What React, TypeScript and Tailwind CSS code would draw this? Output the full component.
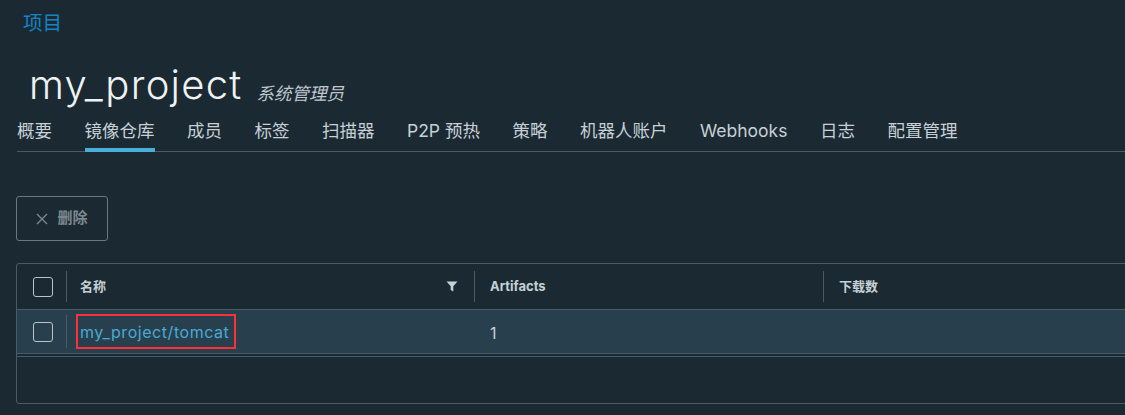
import React from "react";

const tabs = ["概要", "镜像仓库", "成员", "标签", "扫描器", "P2P 预热", "策略", "机器人账户", "Webhooks", "日志", "配置管理"];

function Checkbox() {
  return <div className="w-[20px] h-[20px] rounded-[3px] border border-[#b9c3c9] shrink-0" />;
}

export default function App() {
  return (
    <div className="w-[1125px] h-[415px] overflow-hidden bg-[#1b2a32] font-['Inter','Noto_Sans_CJK_SC',sans-serif]">
      <div className="h-[48px] flex items-center pl-[23px] text-[19.5px] text-[#1683c4]">项目</div>
      <div className="h-[64px] flex items-end pb-[6px] pl-[29px] gap-[14px]">
        <span className="text-[40px] font-light leading-none text-[#eef2f4] pb-[1px] tracking-[1.25px]">my_project</span>
        <span className="text-[17.5px] italic text-[#bfc8ce] leading-none pb-[4px]">系统管理员</span>
      </div>
      <div className="h-[40px] ml-[17px] flex items-stretch gap-[32.5px] border-b border-[#4a5964]">
        {tabs.map((t, i) => (
          <div
            key={t}
            className={
              "flex items-center text-[17.5px] text-[#c7d0d6] pt-[2px] -mb-px " +
              (i === 1 ? "border-b-[4px] border-[#49afd9]" : "border-b-[4px] border-transparent")
            }
          >
            {t}
          </div>
        ))}
      </div>
      <div className="pt-[44px] pl-[16px]">
        <div className="w-[92px] h-[45px] rounded-[3px] border border-[#6a7780] flex items-center justify-center gap-[9px] text-[15px] text-[#7c8890]">
          <svg width="12" height="12" viewBox="0 0 12 12" className="shrink-0">
            <path d="M1 1L11 11M11 1L1 11" stroke="#7c8890" strokeWidth="1.4" />
          </svg>
          <span className="font-bold">删除</span>
        </div>
      </div>
      <div className="mt-[22px] ml-[16px] w-[1130px] h-[141px] rounded-[3px] border border-[#4b5a64] flex flex-col">
        <div className="h-[46px] flex items-center border-b border-[#4b5a64] text-[13px] font-bold text-[#c5d0d6]">
          <div className="w-[49px] flex justify-center pl-[2px]">
            <Checkbox />
          </div>
          <div className="w-[1px] h-[31px] bg-[#4b5a64]" />
          <div className="w-[407px] flex items-center justify-between pl-[13px] pr-[16px]">
            <span>名称</span>
            <svg width="12" height="11" viewBox="0 0 12 11">
              <path d="M0.5 0.5H11.5L7.3 5.2V10.5L4.7 9V5.2Z" fill="#c5d0d6" />
            </svg>
          </div>
          <div className="w-[1px] h-[31px] bg-[#4b5a64]" />
          <div className="w-[348px] pl-[15px]">Artifacts</div>
          <div className="w-[1px] h-[31px] bg-[#4b5a64]" />
          <div className="pl-[15px]">下载数</div>
        </div>
        <div className="h-[44px] bg-[#28404d] flex items-center text-[16px] border-b border-[#4b5a64]">
          <div className="w-[49px] flex justify-center pl-[2px]">
            <Checkbox />
          </div>
          <div className="w-[1px] h-[33px] bg-[#4b5a64]" />
          <div className="w-[407px] pl-[9px]">
            <span className="inline-block border-2 border-[#ff3036] pl-[2px] pr-[5px] pt-[5px] pb-[4px] text-[#49aad6] leading-[22px] tracking-[0.55px]">
              my_project/tomcat
            </span>
          </div>
          <div className="w-[1px]" />
          <div className="pl-[15px] pt-[3px] text-[#c7d0d6]">1</div>
        </div>
        <div className="mt-[2px] border-t border-[#4b5a64]" />
      </div>
    </div>
  );
}
